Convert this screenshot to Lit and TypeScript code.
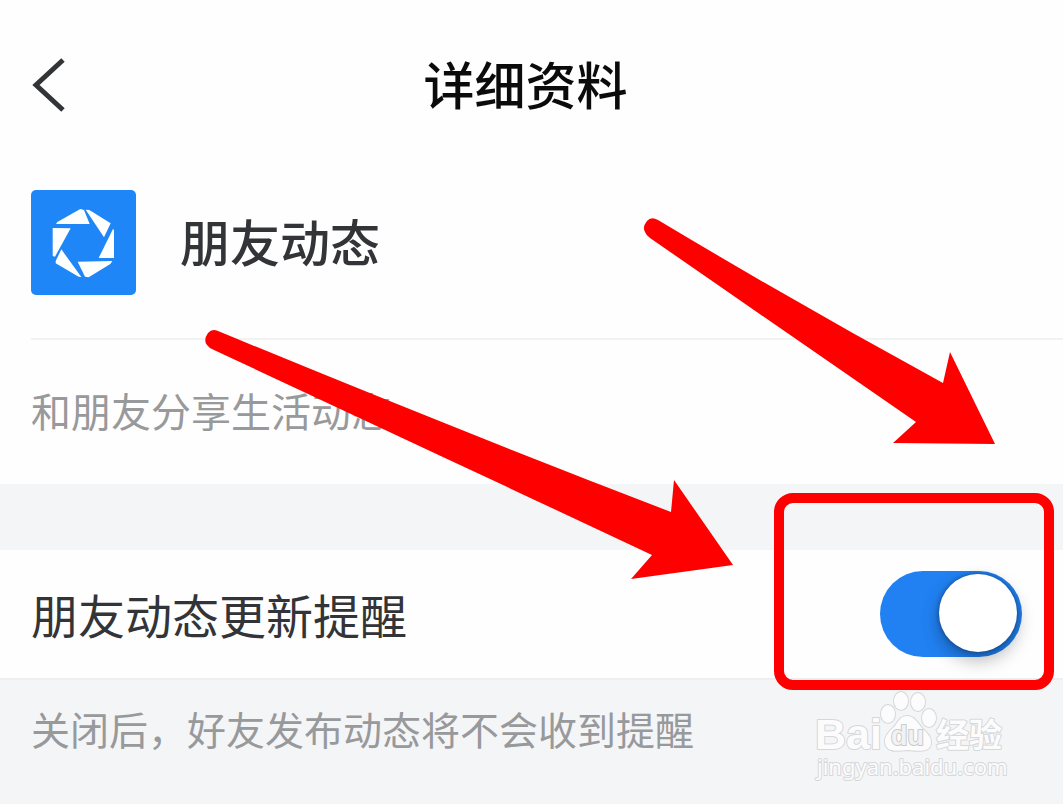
import { LitElement, html, css } from "lit";
import { customElement, state } from "lit/decorators.js";

@customElement("app-root")
class AppRoot extends LitElement {
  @state() private notify = true;

  static styles = css`
    :host {
      display: block;
      position: relative;
      min-height: 100vh;
      overflow: hidden;
      background: #f4f5f7;
      color: #333437;
      font-family: "Noto Sans CJK SC", sans-serif;
    }
    .bar {
      display: grid;
      grid-template-columns: 84px 1fr 96px;
      align-items: center;
      height: 172px;
      background: #fefefe;
    }
    .back {
      justify-self: start;
      display: flex;
      margin-left: 28px;
      padding: 0 0 2px;
      border: 0;
      background: none;
      cursor: pointer;
    }
    .title {
      margin: 0;
      padding-bottom: 6px;
      text-align: center;
      font-size: 51px;
      line-height: 60px;
      font-weight: 500;
      color: #0b0b0c;
    }
    .card {
      background: #fefefe;
    }
    .profile {
      display: flex;
      align-items: center;
      gap: 44px;
      margin-left: 31px;
      padding: 18px 0 43px;
      border-bottom: 2px solid #f0f2f3;
    }
    .logo {
      flex: none;
      display: block;
      width: 105px;
      height: 105px;
      border-radius: 5px;
      background: #1e86f7;
    }
    .name {
      margin: 0;
      padding-bottom: 6px;
      font-size: 50px;
      line-height: 60px;
      font-weight: 500;
    }
    .about {
      margin: 0;
      padding: 40px 31px 44px;
      font-size: 40px;
      line-height: 60px;
      color: #98999b;
    }
    .setting {
      position: relative;
      display: flex;
      align-items: center;
      justify-content: space-between;
      height: 128px;
      margin-top: 66px;
      padding: 0 41px 0 31px;
      border-bottom: 2px solid #eeeff1;
      background: #fefefe;
    }
    .label {
      font-size: 47px;
      line-height: 60px;
    }
    .switch {
      appearance: none;
      flex: none;
      display: flex;
      align-items: center;
      box-sizing: border-box;
      width: 142px;
      height: 86px;
      margin: 0;
      padding: 0 5px 2px;
      border-radius: 43px;
      background: #d5d7db;
      cursor: pointer;
    }
    .switch::before {
      content: "";
      width: 78px;
      height: 78px;
      border-radius: 50%;
      background: #fff;
      box-shadow: 0 8px 18px rgba(0, 0, 0, 0.3), 0 0 5px rgba(0, 0, 0, 0.4);
    }
    .switch:checked {
      justify-content: flex-end;
      background: #2181f2;
    }
    .hint {
      margin: 0;
      padding: 18px 31px;
      font-size: 39px;
      line-height: 60px;
      color: #98999b;
    }
    .frame {
      position: absolute;
      right: 9px;
      top: -57px;
      box-sizing: border-box;
      width: 280px;
      height: 197px;
      border: 10px solid #fe0000;
      border-radius: 19px;
      pointer-events: none;
    }
    .arrows {
      position: absolute;
      top: 0;
      right: 0;
      pointer-events: none;
    }
    .watermark {
      position: absolute;
      top: 684px;
      right: 51px;
      pointer-events: none;
    }
    .mark {
      fill: #fcfcfd;
      stroke: #d6d7d9;
      stroke-width: 2px;
      stroke-linejoin: round;
      paint-order: stroke;
    }
    .latin {
      font: 700 43px "Liberation Sans", sans-serif;
    }
    .cjk {
      font: 700 33px "Noto Sans CJK SC", sans-serif;
    }
    .du {
      font: 700 27px "Liberation Sans", sans-serif;
      fill: #f1f2f3;
      stroke: #c9cacc;
    }
    .site {
      font: 400 22px "Noto Sans", sans-serif;
    }
  `;

  private onToggle(e: Event) {
    this.notify = (e.target as HTMLInputElement).checked;
  }

  render() {
    return html`
      <header class="bar">
        <button class="back" aria-label="返回">
          <svg width="40" height="60" viewBox="0 0 40 60">
            <path d="M35 5 L8 30 L35 55" fill="none" stroke="#333437" stroke-width="5" />
          </svg>
        </button>
        <h1 class="title">详细资料</h1>
      </header>
      <main>
        <section class="card">
          <div class="profile">
            <svg class="logo" viewBox="32 30 315 315" fill="#fdffff" aria-hidden="true">
              <path d="M107 132 L111 126 L180 87 L191 90 L208 132Z" />
              <path d="M196 89 L207 90 L271 130 L251 172Z" />
              <path d="M278 147 L281 150 V234 H235Z" />
              <path d="M172 245 L276 243 L270 252 L205 292 L194 290Z" />
              <path d="M123 208 L183 291 L175 290 L106 250 L106 243Z" />
              <path d="M97 144 L151 145 L104 230 L97 228Z" />
            </svg>
            <h2 class="name">朋友动态</h2>
          </div>
          <p class="about">和朋友分享生活动态</p>
        </section>
        <section class="setting">
          <label class="label" for="notify">朋友动态更新提醒</label>
          <input
            class="switch"
            id="notify"
            type="checkbox"
            role="switch"
            aria-describedby="hint"
            .checked=${this.notify}
            @change=${this.onToggle}
          />
          <div class="frame"></div>
        </section>
        <p class="hint" id="hint">关闭后，好友发布动态将不会收到提醒</p>
      </main>
      <svg class="arrows" width="1063" height="600" viewBox="0 0 1063 600" fill="#fe0000" aria-hidden="true">
        <path d="M218 331 Q212 328 208 333 Q203 340 207 345 Q209 348 214 350 Q420 446 652 555 L631 579 L733 565 L674 480 L671 512 Q450 427 218 331Z" />
        <path d="M658 220 Q651 216 647 221 Q642 227 645 232 Q646 235 650 238 Q780 328 916 422 L893 443 L995 444 L950 352 L943 383 Q800 305 658 220Z" />
      </svg>
      <svg class="watermark" width="204" height="104" viewBox="808 684 204 104" aria-hidden="true">
        <g class="mark">
          <text class="latin" x="815" y="749">Bai</text>
          <ellipse cx="888" cy="714" rx="7" ry="9" />
          <ellipse cx="901" cy="701" rx="7" ry="9" />
          <ellipse cx="918" cy="702" rx="7" ry="9" />
          <ellipse cx="929" cy="718" rx="7" ry="9" />
          <path d="M907 716 C914 716 917 722 922 728 C928 734 931 737 931 742 C931 753 919 751 908 750 C897 751 885 753 885 741 C885 735 890 731 895 726 C899 720 901 716 907 716Z" />
          <text class="du" x="891" y="745">du</text>
          <text class="cjk" x="936" y="747">经验</text>
          <text class="site" x="817" y="775">jingyan.baidu.com</text>
        </g>
      </svg>
    `;
  }
}
